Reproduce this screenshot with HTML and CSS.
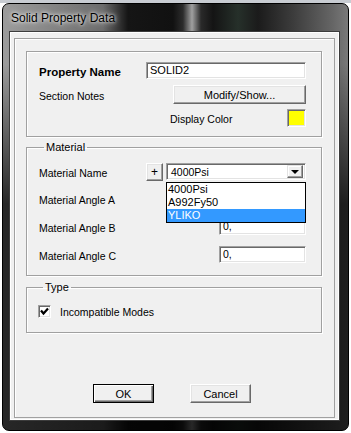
FILE: index.html
```html
<!DOCTYPE html>
<html lang="en">
<head>
    <meta charset="UTF-8">
    <meta name="viewport" content="width=device-width, initial-scale=1.0">
    <title>Solid Property Data</title>
    <link rel="stylesheet" href="styles.css">
</head>
<body>

<div class="window">
    <div class="titlebar">Solid Property Data</div>
    <div class="client">
        <div class="panel">
            <div class="group group-main">
                <div class="row row-name">
                    <span class="lbl lbl-bold">Property Name</span>
                    <div class="edit edit-name">SOLID2</div>
                </div>
                <div class="row row-notes">
                    <span class="lbl">Section Notes</span>
                    <button class="btn btn-notes">Modify/Show...</button>
                </div>
                <div class="row row-color">
                    <span class="lbl lbl-color">Display Color</span>
                    <span class="swatch"></span>
                </div>
            </div>

            <fieldset class="group group-material">
                <legend>Material</legend>
                <div class="row row-mat">
                    <span class="lbl lbl-wide">Material Name</span>
                    <button class="btn btn-plus">+</button>
                    <div class="combo-wrap">
                        <div class="combo">
                            <span class="combo-text">4000Psi</span>
                            <span class="combo-arrow"></span>
                        </div>
                        <ul class="combo-list">
                            <li>4000Psi</li>
                            <li>A992Fy50</li>
                            <li class="selected">YLIKO</li>
                        </ul>
                    </div>
                </div>
                <div class="row row-angle">
                    <span class="lbl">Material Angle A</span>
                    <div class="edit edit-angle">0,</div>
                </div>
                <div class="row row-angle">
                    <span class="lbl">Material Angle B</span>
                    <div class="edit edit-angle">0,</div>
                </div>
                <div class="row row-angle">
                    <span class="lbl">Material Angle C</span>
                    <div class="edit edit-angle">0,</div>
                </div>
            </fieldset>

            <fieldset class="group group-type">
                <legend>Type</legend>
                <div class="row row-check">
                    <span class="check">
                        <svg width="9" height="9" viewBox="0 0 9 9"><path d="M1 3.5 L3.5 6.5 L8 1.5" fill="none" stroke="#000" stroke-width="2.2"/></svg>
                    </span>
                    <span class="lbl">Incompatible Modes</span>
                </div>
            </fieldset>

            <div class="actions">
                <button class="btn btn-default">OK</button>
                <button class="btn">Cancel</button>
            </div>
        </div>
    </div>
</div>

</body>
</html>
```

FILE: styles.css
```css
body {
    margin: 0;
    padding: 0;
    height: 433px;
    overflow: hidden;
    font-family: "Liberation Sans", Arial, sans-serif;
    font-size: 10.5px;
    color: #000;
    background: linear-gradient(#c8ccd2 0, #c8ccd2 3px, #ffffff 3px);
}

.window {
    box-sizing: border-box;
    width: 347px;
    height: 428px;
    margin: 3px 0 0 2px;
    padding: 0 8px 9px 6px;
    border: 1px solid #000;
    border-radius: 7px;
    background:
        linear-gradient(to bottom, rgba(0, 0, 0, 0) 0, rgba(0, 0, 0, 0) 60px, rgba(0, 0, 0, 0.75) 200px),
        linear-gradient(to right, #9c9c9c 0, #8e8e8e 30px, #6c6c6c 100px, #151515 125px, #111 170px, #2c2c2c 180px, #a0a0a0 189px, #2a2a2a 198px, #141414 210px, #26302a 235px, #1b1b1b 255px, #3c3c3c 290px, #666 330px, #7c7c7c 347px);
}

.titlebar {
    box-sizing: border-box;
    height: 27px;
    line-height: 27px;
    padding: 1px 0 0 2px;
    font-size: 12px;
    color: #000;
    text-shadow: 0 0 6px #fff, 0 0 3px rgba(255, 255, 255, 0.8);
}

.client {
    box-sizing: border-box;
    height: 390px;
    padding: 6px 4px 2px 4px;
    background: #f0f0f0;
    border: 1px solid #3c3c3c;
    box-shadow: inset 1px 1px #fff, inset -1px -1px #fff;
}

.panel {
    box-sizing: border-box;
    height: 380px;
    padding: 12px 12px 0 11px;
    border: 1px solid #a0a0a0;
    box-shadow: inset 1px 1px #fff;
}

.group {
    margin: 0;
    border: 1px solid #a0a0a0;
    box-shadow: inset 1px 1px 0 #fff, 1px 1px 0 #fff;
}

.group legend {
    margin-left: 5px;
    padding: 0 2px;
    line-height: 13px;
    font-size: 11px;
}

.group-main {
    padding: 10px 15px 9px 12px;
}

.group-material {
    margin-top: 4px;
    padding: 9px 15px 12px 12px;
}

.group-type {
    margin-top: 5px;
    padding: 11px 15px 14px 11px;
}

.row {
    display: flex;
    align-items: center;
}

.lbl {
    margin-top: 3px;
    line-height: 13px;
    white-space: nowrap;
}

.lbl-bold {
    width: 107px;
    font-weight: bold;
    font-size: 11.5px;
}

.lbl-wide {
    width: 107px;
}

.lbl-color {
    margin-left: 131px;
}

.row-name {
    height: 17px;
}

.row-notes {
    height: 19px;
    margin-top: 6px;
}

.row-color {
    height: 18px;
    margin-top: 5px;
}

.edit {
    box-sizing: border-box;
    height: 17px;
    padding: 1px 0 0 3px;
    line-height: 13px;
    background: #fff;
    border: 1px solid;
    border-color: #a0a0a0 #fff #fff #a0a0a0;
    box-shadow: inset 1px 1px #696969, inset -1px -1px #e3e3e3;
    white-space: nowrap;
}

.edit-name {
    flex: 1;
    font-size: 11px;
}

.edit-angle {
    width: 87px;
    margin-left: auto;
}

.swatch {
    box-sizing: border-box;
    width: 19px;
    height: 18px;
    margin-left: auto;
    background: #ffff00;
    border: 1px solid;
    border-color: #a0a0a0 #fff #fff #a0a0a0;
    box-shadow: inset 1px 1px #696969, inset -1px -1px #e3e3e3;
}

.btn {
    box-sizing: border-box;
    margin: 0;
    padding: 0;
    font-family: inherit;
    font-size: 11px;
    color: #000;
    background: #f0f0f0;
    border: 1px solid;
    border-color: #fff #696969 #696969 #fff;
    box-shadow: inset -1px -1px #a0a0a0, inset 1px 1px #e3e3e3;
    width: 61px;
    height: 19px;
}

.btn-notes {
    width: 133px;
    margin-left: auto;
}

.btn-plus {
    width: 17px;
    height: 18px;
    font-size: 12px;
}

.btn-default {
    border-color: #000;
    box-shadow: inset 1px 1px #fff, inset -1px -1px #696969, inset -2px -2px #a0a0a0;
}

.row-mat {
    height: 18px;
    margin-bottom: 9px;
}

.row-mat .combo-wrap {
    align-self: flex-start;
}

.row-angle {
    height: 17px;
}

.row-angle + .row-angle {
    margin-top: 11px;
}

.combo-wrap {
    position: relative;
    flex: 1;
    margin-left: 3px;
}

.combo {
    box-sizing: border-box;
    height: 17px;
    display: flex;
    align-items: center;
    padding: 0 2px 0 4px;
    background: #fff;
    border: 1px solid;
    border-color: #a0a0a0 #fff #fff #a0a0a0;
    box-shadow: inset 1px 1px #696969, inset -1px -1px #e3e3e3;
}

.combo-text {
    flex: 1;
    line-height: 13px;
    padding-top: 1px;
}

.combo-arrow {
    box-sizing: border-box;
    position: relative;
    width: 16px;
    height: 13px;
    background: #f0f0f0;
    border: 1px solid;
    border-color: #e3e3e3 #696969 #696969 #e3e3e3;
    box-shadow: inset -1px -1px #a0a0a0, inset 1px 1px #fff;
}

.combo-arrow::after {
    content: "";
    position: absolute;
    left: 3px;
    top: 4px;
    border-left: 4px solid transparent;
    border-right: 4px solid transparent;
    border-top: 4px solid #000;
}

.combo-list {
    position: absolute;
    top: 19px;
    left: 0;
    right: 0;
    margin: 0;
    padding: 0;
    list-style: none;
    background: #fff;
    border: 1px solid #000;
    z-index: 2;
}

.combo-list li {
    height: 13px;
    line-height: 13px;
    padding-left: 1px;
    font-size: 11px;
}

.combo-list .selected {
    background: #3399ff;
    color: #fff;
}

.row-check {
    height: 13px;
}

.row-check .lbl {
    margin-top: 2px;
}

.check {
    box-sizing: border-box;
    display: flex;
    align-items: center;
    justify-content: center;
    width: 13px;
    height: 13px;
    margin-right: 9px;
    background: #fff;
    border: 1px solid;
    border-color: #a0a0a0 #fff #fff #a0a0a0;
    box-shadow: inset 1px 1px #696969, inset -1px -1px #e3e3e3;
}

.actions {
    display: flex;
    justify-content: center;
    gap: 36px;
    margin-top: 51px;
    padding-right: 4px;
}
```
